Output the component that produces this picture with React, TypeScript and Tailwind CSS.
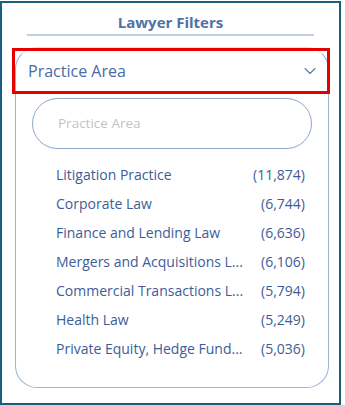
import { ChevronDown } from "lucide-react";

const areas = [
  { name: "Litigation Practice", count: "(11,874)" },
  { name: "Corporate Law", count: "(6,744)" },
  { name: "Finance and Lending Law", count: "(6,636)" },
  { name: "Mergers and Acquisitions L...", count: "(6,106)" },
  { name: "Commercial Transactions L...", count: "(5,794)" },
  { name: "Health Law", count: "(5,249)" },
  { name: "Private Equity, Hedge Fund...", count: "(5,036)" },
];

export default function App() {
  return (
    <div className="w-[345px] h-[405px] bg-white pt-px font-['Open_Sans',sans-serif]">
      <div className="relative w-[341px] h-[404px] border-2 border-[#1b5e7e] bg-white">
        {/* title */}
        <div className="h-[27px] flex items-end justify-center">
          <h2 className="text-[15px] font-bold text-[#4f72a6] leading-none">Lawyer Filters</h2>
        </div>
        <div className="mx-[25px] mt-[4px] h-[2px] bg-[#c3cfe2]" />

        {/* practice area card */}
        <div className="ml-[13px] mt-[11px] w-[314px] h-[341px] rounded-[22px] border border-[#9fb2d2] border-t-[#dde4ef]">
          <div className="h-[46px] flex items-center justify-between pl-[12px] pr-[8px]">
            <span className="text-[16px] text-[#4a6ba3]">Practice Area</span>
            <ChevronDown className="w-[20px] h-[20px] text-[#5b79ad]" strokeWidth={1.3} />
          </div>
          <div className="mx-[16px] mt-[4px] h-[51px] rounded-full border border-[#8fa5c9] flex items-center pl-[25px]">
            <span className="text-[13.5px] text-[#c4c4c4]">Practice Area</span>
          </div>
          <ul className="mt-[11px] pl-[40px] pr-[23px] flex flex-col">
            {areas.map((a) => (
              <li key={a.name} className="h-[29px] flex items-center justify-between text-[14px] text-[#3d5d98]">
                <span>{a.name}</span>
                <span>{a.count}</span>
              </li>
            ))}
          </ul>
        </div>

        {/* highlight overlay */}
        <div className="absolute left-[10px] top-[45px] w-[318px] h-[46px] border-[3px] border-[#e60000]" />
      </div>
    </div>
  );
}
